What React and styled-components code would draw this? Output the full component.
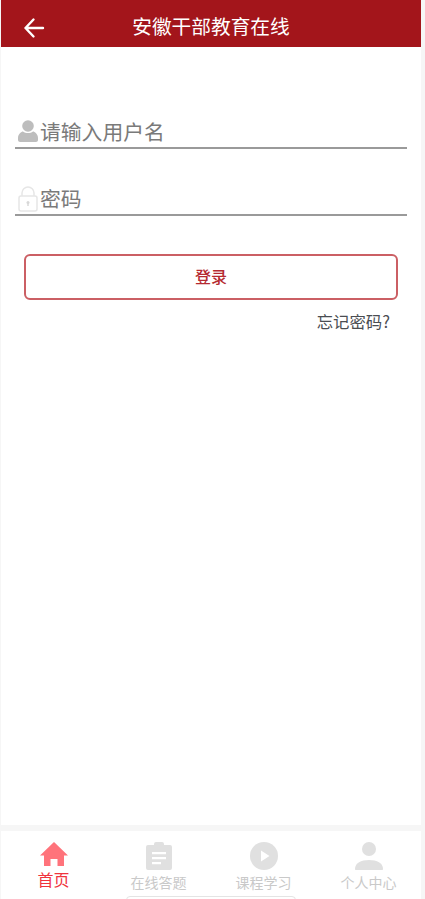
import React from 'react';
import styled, { createGlobalStyle } from 'styled-components';

const Global = createGlobalStyle`
  html, body { margin: 0; padding: 0; background: #f6f6f6; }
  * { box-sizing: border-box; }
  body { font-family: "Noto Sans CJK SC", "Liberation Sans", sans-serif; }
`;
const Page = styled.div`
  width: 425px; height: 899px; overflow: hidden; padding: 0 4px 0 1px;
  display: flex; flex-direction: column; background: #f6f6f6; position: relative;
`;
const Header = styled.header`
  height: 46.5px; flex: none; background: #a3151b; color: #fff;
  display: flex; align-items: center; justify-content: center; position: relative;
`;
const Title = styled.h1`
  margin: 6px 0 0; font-size: 19.7px; font-weight: 400; line-height: 24px;
`;
const BackButton = styled.button`
  position: absolute; left: 22px; top: 17px; padding: 0; border: 0; background: none; width: 22px; height: 22px; display: flex;
`;
const Main = styled.main`
  flex: 1; background: #fff; padding: 66px 14px 0; display: flex; flex-direction: column;
`;
const Field = styled.label`
  height: ${p => p.$height}px; border-bottom: 2px solid #9a9a9a; margin-bottom: ${p => p.$gap}px;
  display: flex; align-items: flex-end; padding: 0 0 1px 3px; gap: 1px;
`;
const FieldIcon = styled.span`
  display: flex; flex: none; width: 21px; margin-bottom: ${p => p.$lift}px;
`;
const Placeholder = styled.span`
  font-size: 20.8px; line-height: 30px; color: #7a7a7a;
`;
const LoginButton = styled.button`
  margin: 0 9px; height: 46px; border: 2px solid #cb5f64; border-radius: 6px; background: #fff;
  color: #b52a31; font-family: inherit; font-size: 16px; font-weight: 500; padding: 0 0 2px; flex: none;
`;
const Forgot = styled.a`
  align-self: flex-end; margin: 9px 17px 0 0; font-size: 16.4px; line-height: 24px; color: #4a4d52;
`;
const TabBar = styled.nav`
  margin-top: 6px; height: 68px; flex: none; background: #fff; display: grid;
  grid-template-columns: repeat(4, 105px); padding-left: 0;
`;
const Tab = styled.div`
  display: flex; flex-direction: column; align-items: center; padding-top: 11px;
  color: ${p => p.$active ? '#f0333d' : '#c9c9c9'};
`;
const TabLabel = styled.span`
  font-size: ${p => p.$active ? 16 : 14}px; line-height: 20px; margin-top: ${p => p.$active ? 2 : 2}px;
`;
const HomeBar = styled.div`
  position: absolute; left: 126px; bottom: -6px; width: 170px; height: 9px;
  border: 1px solid #e4e4e4; border-radius: 4px; background: #fff;
`;

const FieldUser = () => (
  <svg width="20" height="22" viewBox="0 0 20 22" fill="#bdbdbd"><circle cx="10" cy="6" r="5.800" /><path d="M0 18c0-4 3.500-6.500 5-6.500 1.500 1 3 1.500 5 1.500s3.500-.5 5-1.500c1.500 0 5 2.500 5 6.500v2c0 1-1 2-2 2H2c-1 0-2-1-2-2z" /></svg>
);
const TabUser = () => (
  <svg width="28" height="28" viewBox="0 0 28 28" fill="#e0e0e0"><circle cx="14" cy="7" r="7" /><path d="M0 27c0-6 6-9 14-9s14 3 14 9c0 .6-.4 1-1 1H1c-.6 0-1-.4-1-1z" /></svg>
);
const LockIcon = () => (
  <svg width="20" height="26" viewBox="0 0 20 26" fill="none" stroke="#e6e6e6" strokeWidth="1.500"><rect x="1" y="10" width="18" height="15" rx="2" /><path d="M4 10V7a6 6 0 0 1 12 0v3" /><circle cx="10" cy="16.500" r="1.500" fill="#d8d8d8" stroke="none" /><path d="M10 17v3" stroke="#d8d8d8" /></svg>
);
const Back = () => (
  <svg width="22" height="22" viewBox="0 0 22 22" fill="none" stroke="#fff" strokeWidth="2.400" strokeLinecap="round" strokeLinejoin="round"><path d="M2.500 11H20M10.500 2.500 2.500 11l8 8.500" /></svg>
);
const HomeIcon = () => (
  <svg width="28" height="25" viewBox="0 0 28 25" fill="#ff737b"><path d="M14 0 0 13.500h4V24h6.500v-7h7v7H24V13.500h4z" /></svg>
);
const ClipIcon = () => (
  <svg width="26" height="28" viewBox="0 0 26 28"><path fillRule="evenodd" fill="#e0e0e0" d="M2 3h6V2a2 2 0 0 1 2-2h6a2 2 0 0 1 2 2v1h6a2 2 0 0 1 2 2v21a2 2 0 0 1-2 2H2a2 2 0 0 1-2-2V5a2 2 0 0 1 2-2zM6 10v2.200h14V10zM6 15v2.200h14V15zM6 20v2.200h9V20z" /></svg>
);
const PlayIcon = () => (
  <svg width="28" height="28" viewBox="0 0 28 28"><circle cx="14" cy="14" r="14" fill="#e0e0e0" /><path d="M11 8.500v11l8.500-5.500z" fill="#fff" /></svg>
);

export default function App() {
  return (
    <Page>
      <Global />
      <Header>
        <BackButton aria-label="返回"><Back /></BackButton>
        <Title>安徽干部教育在线</Title>
      </Header>
      <Main>
        <Field $height={36} $gap={30}><FieldIcon $lift={4}><FieldUser /></FieldIcon><Placeholder>请输入用户名</Placeholder></Field>
        <Field $height={37} $gap={38}><FieldIcon $lift={1}><LockIcon /></FieldIcon><Placeholder>密码</Placeholder></Field>
        <LoginButton>登录</LoginButton>
        <Forgot>忘记密码?</Forgot>
      </Main>
      <TabBar>
        <Tab $active><HomeIcon /><TabLabel $active>首页</TabLabel></Tab>
        <Tab><ClipIcon /><TabLabel>在线答题</TabLabel></Tab>
        <Tab><PlayIcon /><TabLabel>课程学习</TabLabel></Tab>
        <Tab><TabUser /><TabLabel>个人中心</TabLabel></Tab>
      </TabBar>
      <HomeBar />
    </Page>
  );
}
